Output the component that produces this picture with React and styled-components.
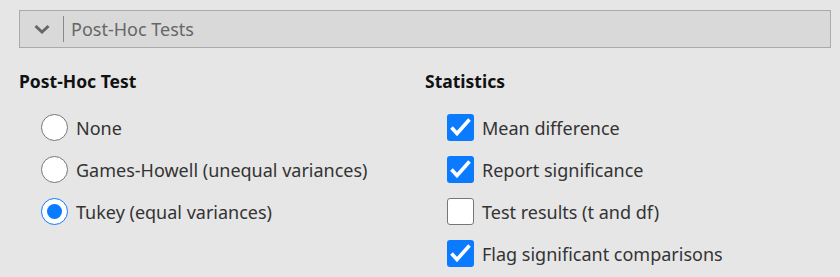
import React from "react";
import styled, { createGlobalStyle } from "styled-components";

const GlobalStyle = createGlobalStyle`
  html, body {
    margin: 0;
    padding: 0;
    background: #e6e6e6;
  }
  body {
    font-family: "Noto Sans", "Open Sans", sans-serif;
  }
`;

const postHocOptions = [
  { label: "None", selected: false },
  { label: "Games-Howell (unequal variances)", selected: false },
  { label: "Tukey (equal variances)", selected: true },
];

const statOptions = [
  { label: "Mean difference", checked: true },
  { label: "Report significance", checked: true },
  { label: "Test results (t and df)", checked: false },
  { label: "Flag significant comparisons", checked: true },
];

const App = () => {
  return (
    <>
      <GlobalStyle />
      <Page>
        <SectionHeader>
          <Chevron>
            <svg width="18" height="12" viewBox="0 0 18 12">
              <path
                d="M2.5 3 L9 9 L15.5 3"
                fill="none"
                stroke="#666"
                strokeWidth="3"
              />
            </svg>
          </Chevron>
          <Divider />
          <HeaderTitle>Post-Hoc Tests</HeaderTitle>
        </SectionHeader>

        <Columns>
          <Column>
            <GroupTitle>Post-Hoc Test</GroupTitle>
            <OptionList>
              {postHocOptions.map((opt) => (
                <OptionRow key={opt.label}>
                  <Radio $selected={opt.selected} />
                  <OptionLabel>{opt.label}</OptionLabel>
                </OptionRow>
              ))}
            </OptionList>
          </Column>
          <Column>
            <GroupTitle>Statistics</GroupTitle>
            <OptionList>
              {statOptions.map((opt) => (
                <OptionRow key={opt.label}>
                  <Checkbox $checked={opt.checked}>
                    {opt.checked && (
                      <svg width="27" height="27" viewBox="0 0 27 27">
                        <path
                          d="M4.5 13.5 L10 19.5 L22.5 5.5"
                          fill="none"
                          stroke="#fff"
                          strokeWidth="3.6"
                        />
                      </svg>
                    )}
                  </Checkbox>
                  <OptionLabel>{opt.label}</OptionLabel>
                </OptionRow>
              ))}
            </OptionList>
          </Column>
        </Columns>
      </Page>
    </>
  );
};

const Page = styled.div`
  padding: 10px 9px 0 19px;
  width: 840px;
  box-sizing: border-box;
`;

const SectionHeader = styled.div`
  display: flex;
  align-items: center;
  height: 38px;
  box-sizing: border-box;
  border: 1px solid #aaaaaa;
  background: #d9d9d9;
`;

const Chevron = styled.div`
  display: flex;
  align-items: center;
  justify-content: center;
  width: 43px;
  padding-left: 1px;
  box-sizing: border-box;
`;

const Divider = styled.div`
  width: 1px;
  height: 26px;
  background: #888;
`;

const HeaderTitle = styled.span`
  margin-left: 7px;
  font-size: 18px;
  color: #666;
`;

const Columns = styled.div`
  display: grid;
  grid-template-columns: 406px 1fr;
  padding-top: 21px;
`;

const Column = styled.div`
  display: flex;
  flex-direction: column;
`;

const GroupTitle = styled.div`
  font-size: 17.5px;
  font-weight: 700;
  color: #111;
  line-height: 24px;
`;

const OptionList = styled.div`
  display: flex;
  flex-direction: column;
  gap: 15px;
  padding-top: 21px;
  padding-left: 22px;
`;

const OptionRow = styled.div`
  display: flex;
  align-items: center;
  height: 27px;
  gap: 8px;
`;

const Radio = styled.div`
  width: 27px;
  height: 27px;
  box-sizing: border-box;
  border-radius: 50%;
  background: #fff;
  border: ${(p) => (p.$selected ? "1.5px solid #0a7aff" : "1px solid #777")};
  display: flex;
  align-items: center;
  justify-content: center;

  &::after {
    content: "";
    display: ${(p) => (p.$selected ? "block" : "none")};
    width: 15px;
    height: 15px;
    border-radius: 50%;
    background: #0a7aff;
  }
`;

const Checkbox = styled.div`
  width: 27px;
  height: 27px;
  box-sizing: border-box;
  border-radius: 3px;
  display: flex;
  align-items: center;
  justify-content: center;
  background: ${(p) => (p.$checked ? "#0a7aff" : "#fff")};
  border: ${(p) => (p.$checked ? "none" : "1px solid #777")};
`;

const OptionLabel = styled.span`
  font-size: 18px;
  line-height: 24px;
  color: #333;
`;

export default App;
